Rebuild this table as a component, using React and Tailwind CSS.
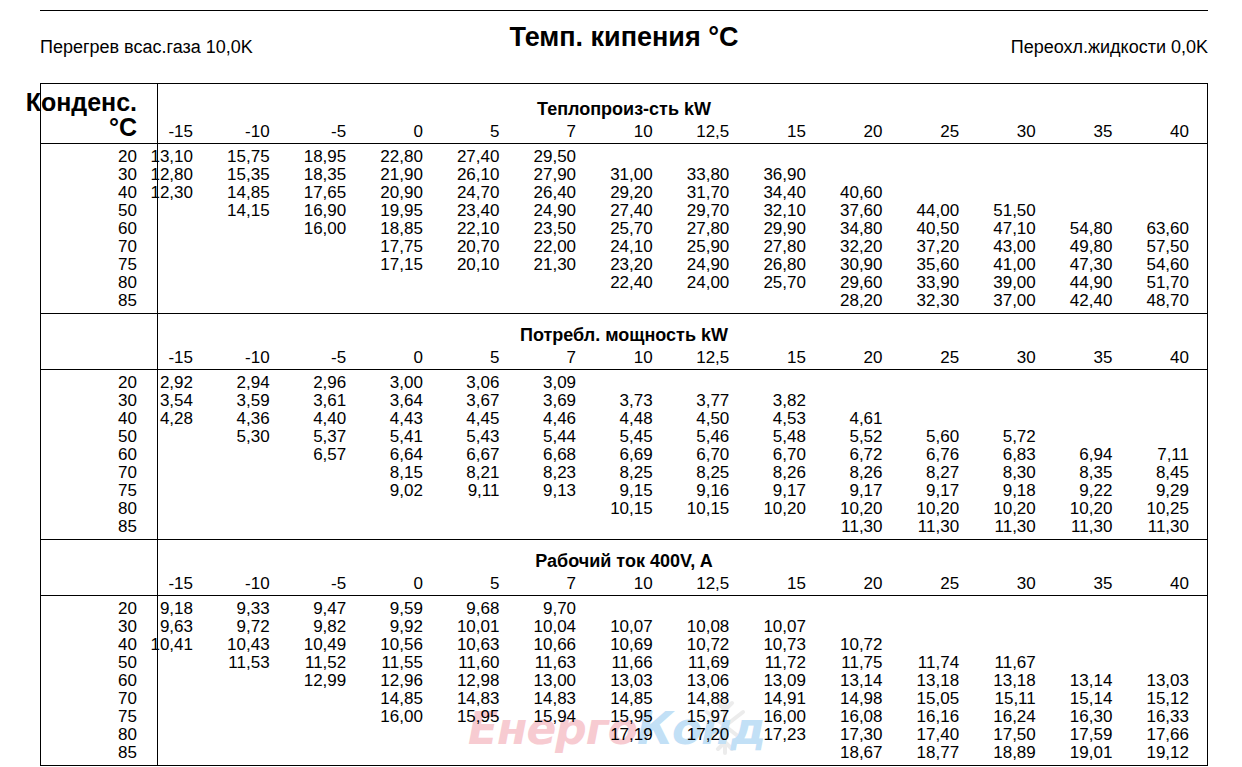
import React from 'react';

const cols = ['-15', '-10', '-5', '0', '5', '7', '10', '12,5', '15', '20', '25', '30', '35', '40'];
const rowLabels = ['20', '30', '40', '50', '60', '70', '75', '80', '85'];
// first filled column of every row (same in all three blocks)
const starts = [0, 0, 0, 1, 2, 3, 3, 6, 9];

const sections = [
  {
    title: 'Теплопроиз-сть kW',
    rows: [
      '13,10 15,75 18,95 22,80 27,40 29,50',
      '12,80 15,35 18,35 21,90 26,10 27,90 31,00 33,80 36,90',
      '12,30 14,85 17,65 20,90 24,70 26,40 29,20 31,70 34,40 40,60',
      '14,15 16,90 19,95 23,40 24,90 27,40 29,70 32,10 37,60 44,00 51,50',
      '16,00 18,85 22,10 23,50 25,70 27,80 29,90 34,80 40,50 47,10 54,80 63,60',
      '17,75 20,70 22,00 24,10 25,90 27,80 32,20 37,20 43,00 49,80 57,50',
      '17,15 20,10 21,30 23,20 24,90 26,80 30,90 35,60 41,00 47,30 54,60',
      '22,40 24,00 25,70 29,60 33,90 39,00 44,90 51,70',
      '28,20 32,30 37,00 42,40 48,70',
    ],
  },
  {
    title: 'Потребл. мощность kW',
    rows: [
      '2,92 2,94 2,96 3,00 3,06 3,09',
      '3,54 3,59 3,61 3,64 3,67 3,69 3,73 3,77 3,82',
      '4,28 4,36 4,40 4,43 4,45 4,46 4,48 4,50 4,53 4,61',
      '5,30 5,37 5,41 5,43 5,44 5,45 5,46 5,48 5,52 5,60 5,72',
      '6,57 6,64 6,67 6,68 6,69 6,70 6,70 6,72 6,76 6,83 6,94 7,11',
      '8,15 8,21 8,23 8,25 8,25 8,26 8,26 8,27 8,30 8,35 8,45',
      '9,02 9,11 9,13 9,15 9,16 9,17 9,17 9,17 9,18 9,22 9,29',
      '10,15 10,15 10,20 10,20 10,20 10,20 10,20 10,25',
      '11,30 11,30 11,30 11,30 11,30',
    ],
  },
  {
    title: 'Рабочий ток 400V, A',
    rows: [
      '9,18 9,33 9,47 9,59 9,68 9,70',
      '9,63 9,72 9,82 9,92 10,01 10,04 10,07 10,08 10,07',
      '10,41 10,43 10,49 10,56 10,63 10,66 10,69 10,72 10,73 10,72',
      '11,53 11,52 11,55 11,60 11,63 11,66 11,69 11,72 11,75 11,74 11,67',
      '12,99 12,96 12,98 13,00 13,03 13,06 13,09 13,14 13,18 13,18 13,14 13,03',
      '14,85 14,83 14,83 14,85 14,88 14,91 14,98 15,05 15,11 15,14 15,12',
      '16,00 15,95 15,94 15,95 15,97 16,00 16,08 16,16 16,24 16,30 16,33',
      '17,19 17,20 17,23 17,30 17,40 17,50 17,59 17,66',
      '18,67 18,77 18,89 19,01 19,12',
    ],
  },
];

const gridCls = 'grid grid-cols-[35px_repeat(13,minmax(0,1fr))] pr-[18px]';

const Cells = ({ values }) => (
  <div className={gridCls}>
    {values.map((v, i) => (
      <div key={i} className="flex justify-end whitespace-nowrap h-[18px]">
        {v}
      </div>
    ))}
  </div>
);

const Section = ({ section, first }) => (
  <div className={first ? '' : 'border-t border-black'}>
    {/* header */}
    <div className={`flex border-b border-black ${first ? 'h-[60px]' : 'h-[56px]'}`}>
      <div className="w-[117px] shrink-0 border-r border-black pr-[20px] pb-[3px] flex flex-col justify-end items-end">
        {first && (
          <>
            <div className="whitespace-nowrap font-bold text-[25px] leading-[25px]">Конденс.</div>
            <div className="whitespace-nowrap font-bold text-[25px] leading-[25px]">°C</div>
          </>
        )}
      </div>
      <div className="flex-1 flex flex-col justify-end pb-[2px] gap-[4px]">
        {/* centred over the whole table, not just the number area */}
        <div className="-ml-[117px] text-center font-bold text-[18px] leading-[20px] whitespace-nowrap">{section.title}</div>
        <Cells values={cols} />
      </div>
    </div>
    {/* data */}
    <div className="flex">
      <div className="w-[117px] shrink-0 border-r border-black pr-[20px] pt-[4px] pb-[3px] flex flex-col items-end">
        {rowLabels.map((r) => (
          <div key={r} className="h-[18px]">{r}</div>
        ))}
      </div>
      <div className="flex-1 pt-[4px] pb-[3px]">
        {section.rows.map((row, i) => {
          const vals = Array(14).fill('');
          row.split(' ').forEach((v, j) => {
            vals[starts[i] + j] = v;
          });
          return <Cells key={i} values={vals} />;
        })}
      </div>
    </div>
  </div>
);

const Snowflake = () => (
  <svg width="44" height="62" viewBox="0 0 44 62" className="text-[#ececec]" fill="none" stroke="currentColor" strokeWidth="4" strokeLinecap="round">
    <path d="M22 4 V58 M4 17 L40 45 M40 17 L4 45" />
    <path d="M15 8 L22 15 L29 8 M15 54 L22 47 L29 54" />
  </svg>
);

export default function App() {
  return (
    <div className="relative w-[1242px] h-[767px] overflow-hidden bg-white text-black font-['Liberation_Sans',Arial,sans-serif] text-[17px] leading-[18px]">
      {/* watermark, behind the numbers */}
      <div className="absolute left-[703px] top-[695px] pointer-events-none">
        <Snowflake />
      </div>
      <div className="absolute left-[468px] top-[704px] pointer-events-none select-none italic font-bold text-[44px] leading-[50px] tracking-[-1px] font-['DejaVu_Sans',sans-serif] whitespace-nowrap">
        <span className="text-[#f7cbd1]">Енерго</span>
        <span className="text-[#c2e0f6]">Конд</span>
      </div>

      <div className="relative ml-[40px] w-[1168px] pt-[10px]">
        <div className="border-t border-black" />
        <div className="grid grid-cols-[1fr_auto_1fr] items-start h-[72px]">
          <div className="pt-[26px] text-[18px] leading-[20px] whitespace-nowrap">Перегрев всас.газа 10,0K</div>
          <div className="pt-[10px] font-bold text-[27px] leading-[32px] whitespace-nowrap">Темп. кипения °C</div>
          <div className="pt-[26px] text-[18px] leading-[20px] whitespace-nowrap justify-self-end">Переохл.жидкости 0,0K</div>
        </div>
        <div className="border border-black">
          {sections.map((s, i) => (
            <Section key={s.title} section={s} first={i === 0} />
          ))}
        </div>
      </div>
    </div>
  );
}
